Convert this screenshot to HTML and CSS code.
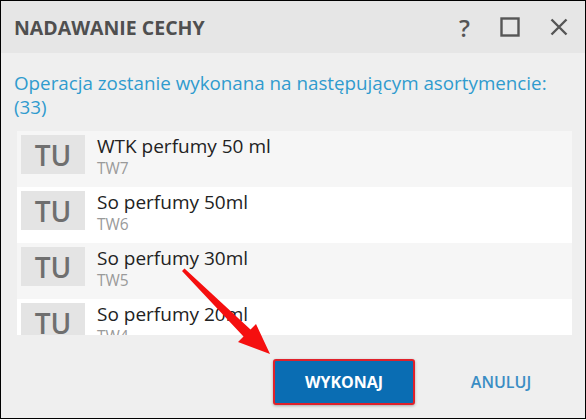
FILE: index.html
```html
<!DOCTYPE html>
<html>
<head>
<meta charset="utf-8">
<title>Nadawanie cechy</title>
<link rel="stylesheet" href="styles.css">
</head>
<body>
<div class="dialog">
    <div class="titlebar">
        <h1>NADAWANIE CECHY</h1>
        <div class="tools">
            <span class="help">?</span>
            <svg class="tool" width="20" height="20" viewBox="0 0 20 20"><rect x="1.5" y="1.5" width="17" height="17" fill="none" stroke="#555" stroke-width="2.4"/></svg>
            <svg class="tool" width="18" height="18" viewBox="0 0 18 18"><path d="M1.5 1.5 L16.5 16.5 M16.5 1.5 L1.5 16.5" stroke="#555" stroke-width="2.4" fill="none"/></svg>
        </div>
    </div>

    <p class="message">Operacja zostanie wykonana na następującym asortymencie:<br>(33)</p>

    <ul class="list">
        <li class="row">
            <div class="thumb">TU</div>
            <div class="info">
                <div class="name">WTK perfumy 50 ml</div>
                <div class="code">TW7</div>
            </div>
        </li>
        <li class="row">
            <div class="thumb">TU</div>
            <div class="info">
                <div class="name">So perfumy 50ml</div>
                <div class="code">TW6</div>
            </div>
        </li>
        <li class="row">
            <div class="thumb">TU</div>
            <div class="info">
                <div class="name">So perfumy 30ml</div>
                <div class="code">TW5</div>
            </div>
        </li>
        <li class="row">
            <div class="thumb">TU</div>
            <div class="info">
                <div class="name">So perfumy 20ml</div>
                <div class="code">TW4</div>
            </div>
        </li>
    </ul>

    <div class="actions">
        <button class="btn primary">WYKONAJ</button>
        <button class="btn link">ANULUJ</button>
    </div>

    <svg class="arrow" width="586" height="420" viewBox="0 0 586 420">
        <polygon points="182,271 184.5,268.5 250.5,329.5 256,324 270,354 238,342 243.5,336.5" fill="#f50f0f"/>
    </svg>
</div>
</body>
</html>
```

FILE: styles.css
```css
* {
    box-sizing: border-box;
}

body {
    margin: 0;
    background-color: #fff;
    font-family: "Open Sans", "Noto Sans", sans-serif;
}

.dialog {
    position: relative;
    width: 586px;
    height: 419px;
    border: 1px solid #000;
    background-color: #efefef;
    display: flex;
    flex-direction: column;
}

.titlebar {
    height: 52px;
    background-color: #e6e6e6;
    display: flex;
    align-items: center;
    justify-content: space-between;
    padding: 0 17px 0 13px;
}

.titlebar h1 {
    margin: 0;
    font-size: 19.5px;
    font-weight: 700;
    color: #4f4f4f;
}

.tools {
    display: flex;
    align-items: center;
    gap: 30px;
}

.help {
    font-size: 24px;
    color: #555;
    font-weight: 600;
}

.message {
    margin: 18px 0 0;
    padding: 0 13px;
    color: #2f9bce;
    font-size: 18.8px;
    line-height: 24px;
}

.list {
    list-style: none;
    margin: 12px 13px 0 16px;
    padding: 0;
    height: 204px;
    overflow: hidden;
    background-color: #fff;
}

.row {
    height: 56px;
    display: flex;
    padding: 4px;
    background-color: #fff;
}

.row:nth-child(odd) {
    background-color: #f6f6f6;
}

.thumb {
    width: 64px;
    height: 39px;
    background-color: #e4e4e4;
    color: #6f6f6f;
    font-size: 28px;
    font-weight: 600;
    display: flex;
    align-items: center;
    justify-content: center;
    flex-shrink: 0;
}

.info {
    margin-left: 12px;
}

.name {
    font-size: 19px;
    line-height: 23px;
    color: #222;
}

.code {
    font-size: 15.5px;
    line-height: 20px;
    color: #9a9a9a;
}

.actions {
    display: flex;
    justify-content: flex-end;
    gap: 15px;
    margin: 24px 13px 0 0;
}

.btn {
    width: 142px;
    height: 46px;
    font-family: inherit;
    font-size: 16px;
    font-weight: 700;
    border-radius: 3px;
    cursor: pointer;
}

.primary {
    background-color: #0a6db3;
    color: #fff;
    border: 2px solid #e0212b;
    box-shadow: 0 1px 3px rgba(0, 0, 0, 0.3);
}

.link {
    background: none;
    border: none;
    color: #3a8dc4;
    font-weight: 600;
}

.arrow {
    position: absolute;
    left: -1px;
    top: -1px;
    pointer-events: none;
}
```
